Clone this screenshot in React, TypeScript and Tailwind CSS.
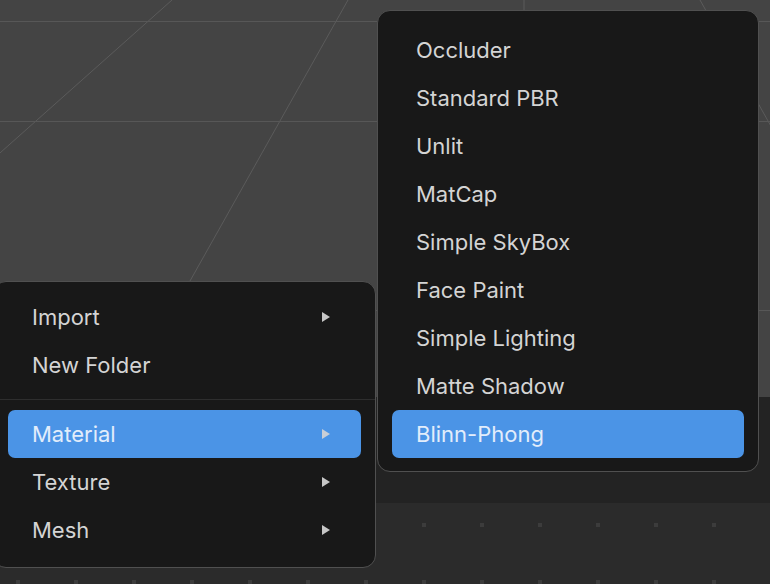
import React from 'react';

const leftItems = [
    { label: 'Import', sub: true },
    { label: 'New Folder', sub: false },
    { sep: true },
    { label: 'Material', sub: true, active: true },
    { label: 'Texture', sub: true },
    { label: 'Mesh', sub: true },
];

const materials = [
    'Occluder',
    'Standard PBR',
    'Unlit',
    'MatCap',
    'Simple SkyBox',
    'Face Paint',
    'Simple Lighting',
    'Matte Shadow',
    'Blinn-Phong',
];

// vanishing point of the viewport grid
const VP = { x: 524, y: -313 };
const rays = [-4, 172, 348, 524, 700, 876];

function Arrow({ active }: { active?: boolean }) {
    return (
        <svg width="8" height="10" viewBox="0 0 8 10" className="mr-[7px]">
            <polygon points="0,0 8,5 0,10" fill={active ? '#c9ced6' : '#c6c6c6'} />
        </svg>
    );
}

function Row({ label, active, sub }: { label: string; active?: boolean; sub?: boolean }) {
    return (
        <div
            className={
                'h-[48px] flex items-center justify-between px-6 rounded-[7px] ' +
                (active ? 'bg-[#4b94e6] text-[#e2edfb]' : 'text-[#d4d4d4]')
            }
        >
            <span>{label}</span>
            {sub && <Arrow active={active} />}
        </div>
    );
}

export default function App() {
    return (
        <div className="relative w-[770px] h-[584px] overflow-hidden flex flex-col bg-[#2b2b2b] font-['Inter','Noto_Sans',sans-serif] text-[22px] leading-none">
            {/* 3d viewport */}
            <div className="h-[397px] bg-[#444444] shrink-0">
                <svg width="770" height="397" className="block">
                    {rays.map((x0) => {
                        const k = (397 - VP.y) / (0 - VP.y);
                        const x1 = VP.x + (x0 - VP.x) * k;
                        return <line key={x0} x1={x0} y1={0} x2={x1} y2={397} stroke="#5b5b5b" strokeWidth="1" />;
                    })}
                    {[21.5, 121.5, 310.5].map((y) => (
                        <line key={y} x1={0} y1={y} x2={770} y2={y} stroke="#575757" strokeWidth="1" />
                    ))}
                </svg>
            </div>
            <div className="h-[106px] bg-[#232323] shrink-0" />
            {/* asset panel */}
            <div className="flex-1 flex flex-col gap-[53px] pt-[20px]">
                {[0, 1].map((r) => (
                    <div key={r} className="flex gap-[54px] pl-[16px]">
                        {Array.from({ length: 14 }).map((_, i) => (
                            <div key={i} className="w-[4px] h-[4px] bg-[#3c3c3c] shrink-0" />
                        ))}
                    </div>
                ))}
            </div>

            {/* context menu */}
            <div className="absolute left-[-7px] top-[281px] w-[383px] rounded-[13px] border border-[#505050] bg-[#181818] px-[14px] pt-[11px] pb-[13px]">
                {leftItems.map((it, i) =>
                    it.sep ? (
                        <div key={i} className="-mx-[14px] my-[10px] h-px bg-[#2e2e2e]" />
                    ) : (
                        <Row key={i} label={it.label!} sub={it.sub} active={it.active} />
                    )
                )}
            </div>

            {/* material submenu */}
            <div className="absolute left-[377px] top-[10px] w-[382px] rounded-[13px] border border-[#505050] bg-[#181818] px-[14px] pt-[15px] pb-[13px]">
                {materials.map((m) => (
                    <Row key={m} label={m} active={m === 'Blinn-Phong'} />
                ))}
            </div>
        </div>
    );
}
